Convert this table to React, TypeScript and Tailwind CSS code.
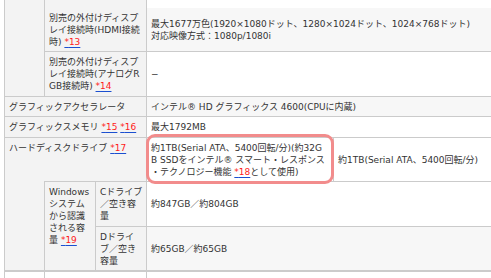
import React from 'react';

const cell = 'border border-[#cbcbcb] px-[4px] pt-[4px] pb-[3.5px]';
const th = `${cell} bg-[#f3f3f3] text-left align-top font-normal`;
const td = `${cell} align-middle`;
const stripe = 'bg-[#f7f7f7]';

function Note({ n }: { n: number }) {
  return (
    <a href="#" className="text-[#1b4fd0] underline underline-offset-2">
      <span className="text-[#ff1a1a]">*{n}</span>
    </a>
  );
}

export default function App() {
  return (
    <div className="h-[278px] w-[491px] overflow-hidden bg-white font-['DejaVu_Sans','Noto_Sans_CJK_JP',sans-serif] text-[9px] leading-[12px] text-[#333]">
      <table className="ml-[4px] w-[516px] table-fixed border-collapse whitespace-nowrap">
        <colgroup>
          <col className="w-[40px]" />
          <col className="w-[51px]" />
          <col className="w-[51px]" />
          <col className="w-[187px]" />
          <col className="w-[187px]" />
        </colgroup>
        <tbody>
          <tr>
            <th rowSpan={3} className={`${th} [border-top-style:hidden]`} />
            <th colSpan={2} className={`${th} h-[5px] p-0 [border-top-style:hidden] [border-bottom-style:hidden]`} />
            <td colSpan={2} className={`${td} h-[5px] p-0 [border-top-style:hidden] [border-bottom-style:hidden]`} />
          </tr>
          <tr>
            <th colSpan={2} className={th}>
              別売の外付けディスプ
              <br />
              レイ接続時(HDMI接続
              <br />
              時) <Note n={13} />
            </th>
            <td colSpan={2} className={`${td} ${stripe}`}>
              最大1677万色(1920×1080ドット、1280×1024ドット、1024×768ドット)
              <br />
              対応映像方式：1080p/1080i
            </td>
          </tr>
          <tr>
            <th colSpan={2} className={th}>
              別売の外付けディスプ
              <br />
              レイ接続時(アナログR
              <br />
              GB接続時) <Note n={14} />
            </th>
            <td colSpan={2} className={td}>
              −
            </td>
          </tr>
          <tr>
            <th colSpan={3} className={th}>
              グラフィックアクセラレータ
            </th>
            <td colSpan={2} className={`${td} ${stripe}`}>
              インテル® HD グラフィックス 4600(CPUに内蔵)
            </td>
          </tr>
          <tr>
            <th colSpan={3} className={th}>
              グラフィックスメモリ <Note n={15} /> <Note n={16} />
            </th>
            <td colSpan={2} className={td}>
              最大1792MB
            </td>
          </tr>
          <tr>
            <th colSpan={3} className={th}>
              ハードディスクドライブ <Note n={17} />
            </th>
            <td className={`${td} relative`}>
              約1TB(Serial ATA、5400回転/分)(約32G
              <br />
              B SSDをインテル® スマート・レスポンス
              <br />
              ・テクノロジー機能 <Note n={18} />として使用)
              <span className="pointer-events-none absolute -top-[4px] -right-[1px] -bottom-[3px] -left-[1px] rounded-[9px] border-[3px] border-[#f28c8c]" />
            </td>
            <td className={td}>約1TB(Serial ATA、5400回転/分)</td>
          </tr>
          <tr>
            <th rowSpan={2} className={`${th} [border-top-style:hidden]`} />
            <th rowSpan={2} className={th}>
              Windows
              <br />
              システム
              <br />
              から認識
              <br />
              される容
              <br />
              量 <Note n={19} />
            </th>
            <th className={th}>
              Cドライブ
              <br />
              ／空き容
              <br />量
            </th>
            <td colSpan={2} className={td}>
              約847GB／約804GB
            </td>
          </tr>
          <tr>
            <th className={th}>
              Dドライ
              <br />
              ブ／空き
              <br />
              容量
            </th>
            <td colSpan={2} className={`${td} ${stripe}`}>
              約65GB／約65GB
            </td>
          </tr>
          <tr>
            <th className={`${th} h-[20px] border-t-2 bg-white`} />
            <th colSpan={2} className={`${th} border-t-2 bg-white`} />
            <td colSpan={2} className={`${td} border-t-2`} />
          </tr>
        </tbody>
      </table>
    </div>
  );
}
